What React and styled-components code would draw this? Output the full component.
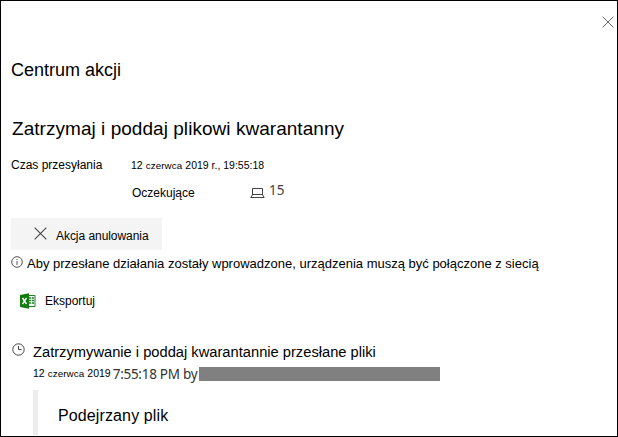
import React from 'react';
import styled, { createGlobalStyle } from 'styled-components';

const GlobalStyle = createGlobalStyle`
  * { box-sizing: border-box; }
  body { margin: 0; background: #fff; }
`;

const Panel = styled.main`
  width: 618px;
  height: 437px;
  border: 1px solid #000;
  overflow: hidden;
  background: #fff;
  color: #000;
  font-family: 'Liberation Sans', Arial, sans-serif;
  display: flex;
  flex-direction: column;
  align-items: flex-start;
  padding-left: 10px;
  svg { display: block; flex: none; }
`;

const Header = styled.header`
  align-self: stretch;
  height: 57px;
  padding: 15px 3px 0 0;
  display: flex;
  justify-content: flex-end;
`;

const CloseButton = styled.button`
  width: 12px;
  height: 12px;
  padding: 0;
  border: 0;
  background: none;
`;

const Title = styled.h1`
  margin: 0;
  font-size: 18px;
  font-weight: 400;
  line-height: 24px;
`;

const Heading = styled.h2`
  margin: 33px 0 0 1px;
  font-size: 19px;
  font-weight: 400;
  line-height: 28px;
  letter-spacing: 0.04px;
  white-space: nowrap;
`;

const Details = styled.div`
  margin-top: 14px;
  display: grid;
  grid-template-columns: 120px 119px auto;
  grid-template-rows: 28px 33px;
  font-size: 12px;
  line-height: 16px;
`;

const DateValue = styled.span`
  grid-column: 2 / 4;
  white-space: nowrap;
`;

const DateText = styled.span`
  display: inline-flex;
  align-items: baseline;
  font-size: 10.5px;
  line-height: 15px;
  gap: 3px;
  white-space: nowrap;
`;

const Month = styled.span`
  font-size: 9.8px;
  letter-spacing: 0.1px;
`;

const Status = styled.span`
  grid-column: 2;
  padding-left: 1px;
`;

const Devices = styled.span`
  display: flex;
  align-items: flex-start;
  gap: 4px;
  color: #444;
  font-family: 'Noto Sans', sans-serif;
  font-size: 13.5px;
  svg { margin-top: 2px; }
`;

const Count = styled.span`
  margin-top: -3px;
`;

const CancelButton = styled.button`
  width: 151px;
  height: 32px;
  border: 0;
  padding: 3px 0 0 23px;
  background: #f4f4f4;
  display: flex;
  align-items: center;
  gap: 9px;
  color: #000;
  font: 12px/16px 'Liberation Sans', Arial, sans-serif;
  letter-spacing: -0.05px;
  white-space: nowrap;
  svg { margin-top: -4px; }
`;

const Notice = styled.div`
  height: 20px;
  margin-top: 4px;
  display: flex;
  align-items: center;
  gap: 4px;
  font-size: 13px;
  line-height: 20px;
  white-space: nowrap;
  svg { margin-top: -4px; }
`;

const ExportLink = styled.div`
  margin: 19px 0 0 9px;
  height: 17px;
  display: flex;
  gap: 9px;
  font-size: 12px;
  line-height: 17px;
`;

const ExportLabel = styled.span`
  position: relative;
  &::after {
    content: '';
    position: absolute;
    left: 14px;
    top: 17px;
    width: 2px;
    height: 1px;
    background: #777;
  }
`;

const Event = styled.section`
  margin-top: 32px;
  display: grid;
  grid-template-columns: 22px auto;
  > svg { margin: 1px 0 0 1px; }
`;

const EventTitle = styled.h3`
  margin: 0;
  height: 23px;
  font-size: 14.7px;
  font-weight: 400;
  line-height: 20px;
  white-space: nowrap;
`;

const EventMeta = styled.div`
  height: 25px;
  display: flex;
  align-items: flex-start;
  padding-top: 1px;
`;

const Time = styled.span`
  margin-left: 2px;
  font: 13.5px/16px 'Noto Sans', sans-serif;
  color: #333;
  width: 86px;
  letter-spacing: -0.28px;
  white-space: nowrap;
`;

const Redaction = styled.span`
  width: 241px;
  height: 14px;
  margin-top: 1px;
  background: #808080;
`;

const FileBlock = styled.div`
  height: 45px;
  border-left: 5px solid #ededed;
  padding: 16px 0 0 20px;
  font-size: 16px;
  line-height: 20px;
  letter-spacing: 0.12px;
`;

const CrossIcon = ({ size, color }) => (
  <svg width={size} height={size} viewBox="0 0 12 12" stroke={color} fill="none">
    <path d="M.6.6 11.4 11.4M11.4.6.6 11.4" />
  </svg>
);

const LaptopIcon = () => (
  <svg width="15" height="11" viewBox="0 0 15 11" fill="none" stroke="#444">
    <path d="M2.5 8V1.5h10V8M2.5 7.5h10M2.3 8 .8 10.5h13.4L12.7 8" />
  </svg>
);

const InfoIcon = () => (
  <svg width="12" height="12" viewBox="0 0 12 12" fill="none" stroke="#555">
    <circle cx="6" cy="6" r="5.3" />
    <path d="M6 5v4M6 3v1" />
  </svg>
);

const ExcelIcon = () => (
  <svg width="16" height="16" viewBox="0 0 16 16">
    <path d="M8.5 2.5h6.5v11H8.5z" fill="#fff" stroke="#1d7f24" />
    <path d="M9 5h5M9 7.5h5M9 10h5" stroke="#1d7f24" strokeWidth="1.4" />
    <path d="M11.5 3v10" stroke="#fff" strokeWidth=".7" />
    <path d="M0 2 9 .3v15.4L0 14z" fill="#107c10" />
    <path d="m2.5 5 4 6M6.5 5l-4 6" stroke="#fff" strokeWidth="1.4" />
  </svg>
);

const ClockIcon = () => (
  <svg width="13" height="13" viewBox="0 0 13 13" fill="none" stroke="#444">
    <circle cx="6.5" cy="6.5" r="5.7" />
    <path d="M6.5 3v3.5H9.5" />
  </svg>
);

const PolishDate = ({ rest }) => (
  <DateText>
    <span>12</span>
    <Month>czerwca</Month>
    <span>{rest}</span>
  </DateText>
);

export default function App() {
  return (
    <Panel>
      <GlobalStyle />
      <Header>
        <CloseButton aria-label="Zamknij">
          <CrossIcon size={12} color="#666" />
        </CloseButton>
      </Header>
      <Title>Centrum akcji</Title>
      <Heading>Zatrzymaj i poddaj plikowi kwarantanny</Heading>
      <Details>
        <span>Czas przesyłania</span>
        <DateValue><PolishDate rest="2019 r., 19:55:18" /></DateValue>
        <Status>Oczekujące</Status>
        <Devices><LaptopIcon /><Count>15</Count></Devices>
      </Details>
      <CancelButton>
        <CrossIcon size={13} color="#444" />
        Akcja anulowania
      </CancelButton>
      <Notice>
        <InfoIcon />
        <span>Aby przesłane działania zostały wprowadzone, urządzenia muszą być połączone z siecią</span>
      </Notice>
      <ExportLink><ExcelIcon /><ExportLabel>Eksportuj</ExportLabel></ExportLink>
      <Event>
        <ClockIcon />
        <div>
          <EventTitle>Zatrzymywanie i poddaj kwarantannie przesłane pliki</EventTitle>
          <EventMeta>
            <PolishDate rest="2019" />
            <Time>7:55:18 PM by</Time>
            <Redaction />
          </EventMeta>
          <FileBlock>Podejrzany plik</FileBlock>
        </div>
      </Event>
    </Panel>
  );
}
